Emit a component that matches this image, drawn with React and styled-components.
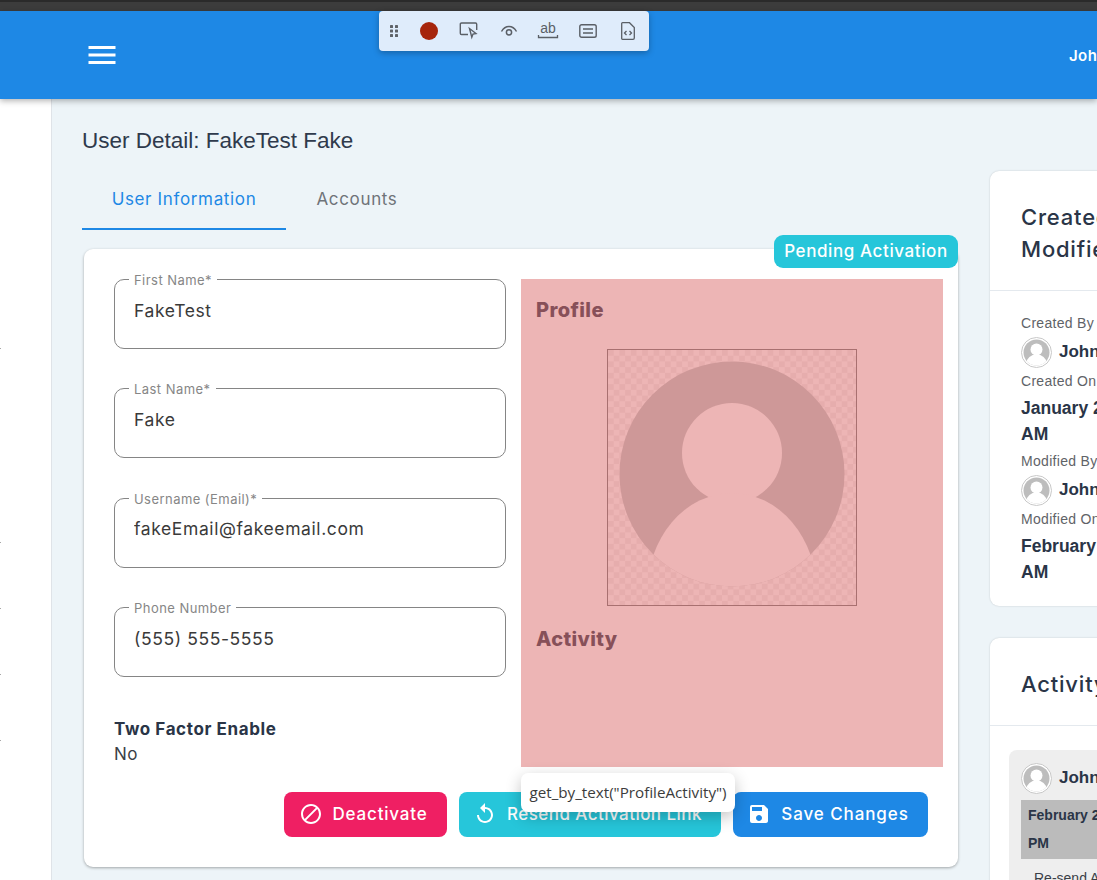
import React from 'react';
import styled, { createGlobalStyle } from 'styled-components';
import { MdMenu, MdBlock, MdReplay, MdSave } from 'react-icons/md';

const GlobalStyle = createGlobalStyle`
  html, body {
    margin: 0;
    height: 880px;
    overflow: hidden;
    background: #edf4f8;
    font-family: 'Inter', 'Liberation Sans', sans-serif;
  }
  * { box-sizing: border-box; }
`;

const Page = styled.div`
  width: 1097px;
  height: 880px;
  overflow: hidden;
  position: relative;
`;

const BrowserStrip = styled.div`
  height: 11px;
  background: #3c3c3c;
  border-top: 2px solid #2a2a2a;
`;

const Header = styled.header`
  height: 88px;
  background: #1e88e5;
  display: flex;
  align-items: center;
  justify-content: space-between;
  padding-left: 84px;
  box-shadow: 0 2px 6px rgba(0, 0, 0, 0.3);
  position: relative;
  z-index: 2;
  color: #fff;
  svg { display: block; }
`;

const HeaderUser = styled.span`
  width: 28px;
  font-size: 15px;
  font-weight: 600;
  letter-spacing: 0.4px;
  white-space: nowrap;
`;

const Body = styled.div`
  display: flex;
  height: 781px;
`;

const Sidebar = styled.aside`
  flex: 0 0 52px;
  background: #fff;
  border-right: 1px solid #dfe3e8;
  display: flex;
  flex-direction: column;
`;

const SidebarTick = styled.span`
  width: 1px;
  height: 1px;
  margin-top: ${(p) => p.$gap}px;
  background: #a8a8a8;
`;

const Main = styled.main`
  flex: 1;
  padding: 27px 0 0 30px;
  min-width: 0;
  display: flex;
  gap: 32px;
`;

const LeftColumn = styled.div`
  flex: 0 0 876px;
`;

const PageTitle = styled.h1`
  margin: 0;
  font-family: 'Liberation Sans', sans-serif;
  font-size: 22.5px;
  line-height: 30px;
  font-weight: 400;
  color: #2f3a4c;
`;

const Tabs = styled.div`
  display: flex;
  margin-top: 15px;
`;

const Tab = styled.div`
  width: ${(p) => (p.$active ? '204px' : '142px')};
  height: 59px;
  display: flex;
  align-items: center;
  justify-content: center;
  font-size: 17px;
  letter-spacing: 0.65px;
  padding-bottom: 1px;
  color: ${(p) => (p.$active ? '#1e88e5' : '#6f7378')};
  border-bottom: 2px solid ${(p) => (p.$active ? '#1e88e5' : 'transparent')};
`;

const Card = styled.section`
  position: relative;
  margin: 19px 0 0 2px;
  width: 874px;
  height: 618px;
  background: #fff;
  border-radius: 9px;
  box-shadow: 0 1px 3px rgba(0, 0, 0, 0.32);
  padding: 30px 15px 0 30px;
`;

const StatusBadge = styled.span`
  position: absolute;
  top: -14px;
  right: 0;
  width: 184px;
  height: 33px;
  padding-bottom: 2px;
  border-radius: 9px;
  background: #26c6da;
  color: #fff;
  font-size: 17px;
  font-weight: 500;
  letter-spacing: 0.6px;
  display: flex;
  align-items: center;
  justify-content: center;
  white-space: nowrap;
`;

const FormGrid = styled.div`
  display: grid;
  grid-template-columns: 392px 422px;
  column-gap: 15px;
`;

const Fields = styled.div`
  display: flex;
  flex-direction: column;
  gap: 39.4px;
`;

const Field = styled.label`
  position: relative;
  display: block;
  height: 70px;
  border: 1px solid #858585;
  border-radius: 10px;
`;

const FieldLabel = styled.span`
  position: absolute;
  top: -7px;
  left: 14px;
  padding: 0 5px;
  background: #fff;
  font-size: 13px;
  line-height: 14px;
  letter-spacing: 0.45px;
  color: #868686;
  white-space: nowrap;
`;

const FieldInput = styled.input`
  width: 100%;
  height: 60px;
  border: 0;
  outline: 0;
  padding: 0 19px;
  background: transparent;
  font: inherit;
  font-size: 17.5px;
  letter-spacing: 0.6px;
  color: #3a3a3a;
`;

const ToggleBlock = styled.div`
  margin-top: 41px;
`;

const ToggleLabel = styled.div`
  font-size: 17px;
  line-height: 22px;
  font-weight: 700;
  letter-spacing: 0.6px;
  color: #2a3547;
`;

const ToggleValue = styled.div`
  margin-top: 3px;
  font-size: 17px;
  line-height: 22px;
  letter-spacing: 0.5px;
  color: #3a3f47;
`;

const Highlight = styled.div`
  height: 488px;
  background: #edb5b5;
  padding: 18px 15px 0;
  display: flex;
  flex-direction: column;
`;

const PinkHeading = styled.h2`
  margin: 0;
  font-size: 20px;
  line-height: 26px;
  font-weight: 800;
  letter-spacing: 0.4px;
  color: #875059;
`;

const ImageFrame = styled.div`
  align-self: center;
  margin: 26px 0 20px;
  width: 250px;
  height: 257px;
  border: 1px solid #a87070;
  svg { display: block; }
`;

const Actions = styled.div`
  display: flex;
  justify-content: flex-end;
  gap: 12px;
  margin-top: 25px;
  padding-right: 15px;
`;

const ActionButton = styled.button`
  height: 45px;
  width: ${(p) => p.$width}px;
  border: 0;
  border-radius: 8px;
  background: ${(p) => p.$color};
  color: #fff;
  font: inherit;
  font-size: 17px;
  font-weight: 500;
  letter-spacing: ${(p) => p.$spacing}px;
  white-space: nowrap;
  display: flex;
  align-items: center;
  justify-content: center;
  gap: 10px;
  padding: 0 5px 2px 0;
  svg { flex: none; }
`;

const Tooltip = styled.div`
  position: absolute;
  left: 437px;
  top: 524px;
  width: 214px;
  height: 39px;
  padding-bottom: 2px;
  border-radius: 7px;
  background: #fff;
  box-shadow: 0 5px 16px rgba(0, 0, 0, 0.24);
  font-family: 'Open Sans', 'Liberation Sans', sans-serif;
  font-size: 15.2px;
  color: #3c3c3c;
  display: flex;
  align-items: center;
  justify-content: center;
  white-space: nowrap;
`;

const RightColumn = styled.div`
  flex: 0 0 300px;
  margin-top: 45px;
  display: flex;
  flex-direction: column;
  gap: 32px;
`;

const SideCard = styled.section`
  background: #fff;
  border-radius: 9px;
  box-shadow: 0 0 2px rgba(0, 0, 0, 0.18);
`;

const SideHeader = styled.h3`
  margin: 0;
  padding: 30px 31px 25px;
  font-size: 22px;
  line-height: 32px;
  font-weight: 500;
  letter-spacing: 0.8px;
  color: #2a3547;
  border-bottom: 1px solid #e4e9ee;
`;

const Meta = styled.div`
  padding: 22px 31px 17px;
`;

const MetaLabel = styled.div`
  font-family: 'Liberation Sans', sans-serif;
  font-size: 14px;
  line-height: 20px;
  letter-spacing: 0.3px;
  color: #5f6368;
`;

const MetaValue = styled.div`
  margin: 4px 0;
  font-family: 'Liberation Sans', sans-serif;
  font-size: 17.5px;
  line-height: 26px;
  font-weight: 700;
  color: #2a3547;
`;

const UserRow = styled.div`
  display: flex;
  align-items: center;
  gap: 7px;
  height: 30px;
  margin: 4px 0;
  font-family: 'Liberation Sans', sans-serif;
  font-size: 17px;
  font-weight: 700;
  color: #2a3547;
`;

const AvatarWrap = styled.span`
  flex: none;
  width: 31px;
  height: 31px;
  svg { display: block; }
`;

const ActivityList = styled.div`
  padding: 24px 19px 0;
`;

const ActivityItem = styled.div`
  background: #eeeeee;
  border-radius: 8px 8px 0 0;
  padding: 9px 12px 0;
`;

const ActivityDate = styled.div`
  margin-top: 7px;
  background: #bbbbbb;
  padding: 1px 7px 2px;
  font-family: 'Liberation Sans', sans-serif;
  font-size: 14px;
  line-height: 28px;
  font-weight: 700;
  color: #2a3547;
`;

const ActivityText = styled.div`
  padding: 9px 13px;
  font-family: 'Liberation Sans', sans-serif;
  font-size: 14px;
  line-height: 20px;
  color: #3a3f47;
`;

const RecorderBar = styled.div`
  position: absolute;
  left: 379px;
  top: 11px;
  z-index: 5;
  width: 270px;
  height: 40px;
  border-radius: 4px;
  background: #dfecfb;
  box-shadow: 0 2px 6px rgba(0, 0, 0, 0.28);
  display: flex;
  align-items: center;
  padding-left: 7px;
`;

const RecorderSlot = styled.span`
  width: ${(p) => p.$width}px;
  height: 24px;
  display: flex;
  align-items: center;
  justify-content: center;
  svg { display: block; }
`;

const fields = [
  { label: 'First Name*', value: 'FakeTest' },
  { label: 'Last Name*', value: 'Fake' },
  { label: 'Username (Email)*', value: 'fakeEmail@fakeemail.com' },
  { label: 'Phone Number', value: '(555) 555-5555' },
];

const tickGaps = [249, 193, 65, 65, 65];

const Avatar = () => (
  <AvatarWrap>
    <svg width="31" height="31" viewBox="0 0 31 31">
      <defs>
        <clipPath id="avatar-clip">
          <circle cx="15.5" cy="15.5" r="13" />
        </clipPath>
      </defs>
      <circle cx="15.5" cy="15.5" r="15" fill="#fff" stroke="#c8c8c8" />
      <circle cx="15.5" cy="15.5" r="13" fill="#bdbdbd" />
      <g clipPath="url(#avatar-clip)" fill="#fff">
        <circle cx="15.5" cy="12.5" r="6" />
        <ellipse cx="15.5" cy="26" rx="10" ry="8.5" />
      </g>
    </svg>
  </AvatarWrap>
);

const ProfileImage = () => (
  <svg width="248" height="255" viewBox="0 0 248 255">
    <defs>
      <pattern id="checker" width="11.4" height="11.4" patternUnits="userSpaceOnUse">
        <rect width="11.4" height="11.4" fill="#edb5b5" />
        <rect width="5.7" height="5.7" fill="#e6adad" />
        <rect x="5.7" y="5.7" width="5.7" height="5.7" fill="#e6adad" />
      </pattern>
      <clipPath id="portrait-clip">
        <circle cx="124" cy="124" r="112.5" />
      </clipPath>
    </defs>
    <rect width="248" height="255" fill="url(#checker)" />
    <circle cx="124" cy="124" r="112.5" fill="#ce9898" />
    <g clipPath="url(#portrait-clip)" fill="#edb5b5">
      <circle cx="124" cy="103" r="50" />
      <ellipse cx="124" cy="243" rx="85" ry="100" />
    </g>
  </svg>
);

const RecorderIcons = () => (
  <>
    <RecorderSlot $width={16}>
      <svg width="12" height="14" viewBox="0 0 12 14" fill="#5f6368">
        <rect x="2" y="1" width="3" height="3" rx="0.6" />
        <rect x="7" y="1" width="3" height="3" rx="0.6" />
        <rect x="2" y="5.5" width="3" height="3" rx="0.6" />
        <rect x="7" y="5.5" width="3" height="3" rx="0.6" />
        <rect x="2" y="10" width="3" height="3" rx="0.6" />
        <rect x="7" y="10" width="3" height="3" rx="0.6" />
      </svg>
    </RecorderSlot>
    <RecorderSlot $width={54}>
      <svg width="20" height="20" viewBox="0 0 20 20">
        <circle cx="10" cy="10" r="9" fill="#a6250c" />
      </svg>
    </RecorderSlot>
    <RecorderSlot $width={26}>
      <svg width="20" height="18" viewBox="0 0 20 18" fill="none" stroke="#5a5f66" strokeWidth="1.4">
        <path d="M9 12.5H2.5a1.2 1.2 0 0 1-1.2-1.2V2.2A1.2 1.2 0 0 1 2.5 1h14a1.2 1.2 0 0 1 1.2 1.2V8" />
        <path d="M10.5 6.5l6.5 5-3 .6-1.2 3.2z" />
      </svg>
    </RecorderSlot>
    <RecorderSlot $width={53}>
      <svg width="18" height="14" viewBox="0 0 18 14" fill="none" stroke="#5a5f66" strokeWidth="1.5">
        <path d="M1.5 7.5C3.5 4 6 2.5 9 2.5s5.5 1.5 7.5 5" />
        <circle cx="9" cy="8.3" r="2.6" />
      </svg>
    </RecorderSlot>
    <RecorderSlot $width={26}>
      <svg width="22" height="20" viewBox="0 0 22 20">
        <text x="11" y="12" textAnchor="middle" fontFamily="'Liberation Sans', sans-serif" fontSize="14" fill="#5a5f66">ab</text>
        <path d="M1.5 14v2.5h19V14" fill="none" stroke="#5a5f66" strokeWidth="1.3" />
      </svg>
    </RecorderSlot>
    <RecorderSlot $width={54}>
      <svg width="18" height="14" viewBox="0 0 18 14" fill="none" stroke="#5a5f66" strokeWidth="1.4">
        <rect x="0.8" y="0.8" width="16.4" height="12.4" rx="1.8" />
        <path d="M4 5h10M4 9h10" />
      </svg>
    </RecorderSlot>
    <RecorderSlot $width={26}>
      <svg width="14" height="18" viewBox="0 0 14 18" fill="none" stroke="#5a5f66" strokeWidth="1.3">
        <path d="M1.5.7h7l4.8 4.8V16a1.3 1.3 0 0 1-1.3 1.3H1.5A.8.8 0 0 1 .7 16.5V1.5A.8.8 0 0 1 1.5.7z" />
        <path d="M5.5 9L3.5 11l2 2M8.5 9l2 2-2 2" />
      </svg>
    </RecorderSlot>
  </>
);

export default function App() {
  return (
    <Page>
      <GlobalStyle />
      <BrowserStrip />
      <RecorderBar>
        <RecorderIcons />
      </RecorderBar>
      <Header>
        <MdMenu size={36} />
        <HeaderUser>John</HeaderUser>
      </Header>
      <Body>
        <Sidebar>
          {tickGaps.map((gap, i) => (
            <SidebarTick key={i} $gap={gap} />
          ))}
        </Sidebar>
        <Main>
          <LeftColumn>
            <PageTitle>User Detail: FakeTest Fake</PageTitle>
            <Tabs>
              <Tab $active>User Information</Tab>
              <Tab>Accounts</Tab>
            </Tabs>
            <Card>
              <StatusBadge>Pending Activation</StatusBadge>
              <FormGrid>
                <div>
                  <Fields>
                    {fields.map((f) => (
                      <Field key={f.label}>
                        <FieldLabel>{f.label}</FieldLabel>
                        <FieldInput readOnly value={f.value} />
                      </Field>
                    ))}
                  </Fields>
                  <ToggleBlock>
                    <ToggleLabel>Two Factor Enable</ToggleLabel>
                    <ToggleValue>No</ToggleValue>
                  </ToggleBlock>
                </div>
                <Highlight>
                  <PinkHeading>Profile</PinkHeading>
                  <ImageFrame>
                    <ProfileImage />
                  </ImageFrame>
                  <PinkHeading>Activity</PinkHeading>
                </Highlight>
              </FormGrid>
              <Actions>
                <ActionButton $width={163} $color="#ef1f63" $spacing={0.8}>
                  <MdBlock size={24} />
                  Deactivate
                </ActionButton>
                <ActionButton $width={262} $color="#26c6da" $spacing={0.45}>
                  <MdReplay size={24} />
                  Resend Activation Link
                </ActionButton>
                <ActionButton $width={195} $color="#1e88e5" $spacing={0.9}>
                  <MdSave size={24} />
                  Save Changes
                </ActionButton>
              </Actions>
              <Tooltip>get_by_text("ProfileActivity")</Tooltip>
            </Card>
          </LeftColumn>
          <RightColumn>
            <SideCard>
              <SideHeader>
                Created and
                <br />
                Modified
              </SideHeader>
              <Meta>
                <MetaLabel>Created By</MetaLabel>
                <UserRow>
                  <Avatar />
                  John
                </UserRow>
                <MetaLabel>Created On</MetaLabel>
                <MetaValue>
                  January 24, 2024 10:15:32
                  <br />
                  AM
                </MetaValue>
                <MetaLabel>Modified By</MetaLabel>
                <UserRow>
                  <Avatar />
                  John
                </UserRow>
                <MetaLabel>Modified On</MetaLabel>
                <MetaValue>
                  February 2, 2024 9:40:11
                  <br />
                  AM
                </MetaValue>
              </Meta>
            </SideCard>
            <SideCard>
              <SideHeader>Activity</SideHeader>
              <ActivityList>
                <ActivityItem>
                  <UserRow>
                    <Avatar />
                    John
                  </UserRow>
                  <ActivityDate>
                    February 2, 2024 3:12:45
                    <br />
                    PM
                  </ActivityDate>
                  <ActivityText>Re-send Activation Link</ActivityText>
                </ActivityItem>
              </ActivityList>
            </SideCard>
          </RightColumn>
        </Main>
      </Body>
    </Page>
  );
}
